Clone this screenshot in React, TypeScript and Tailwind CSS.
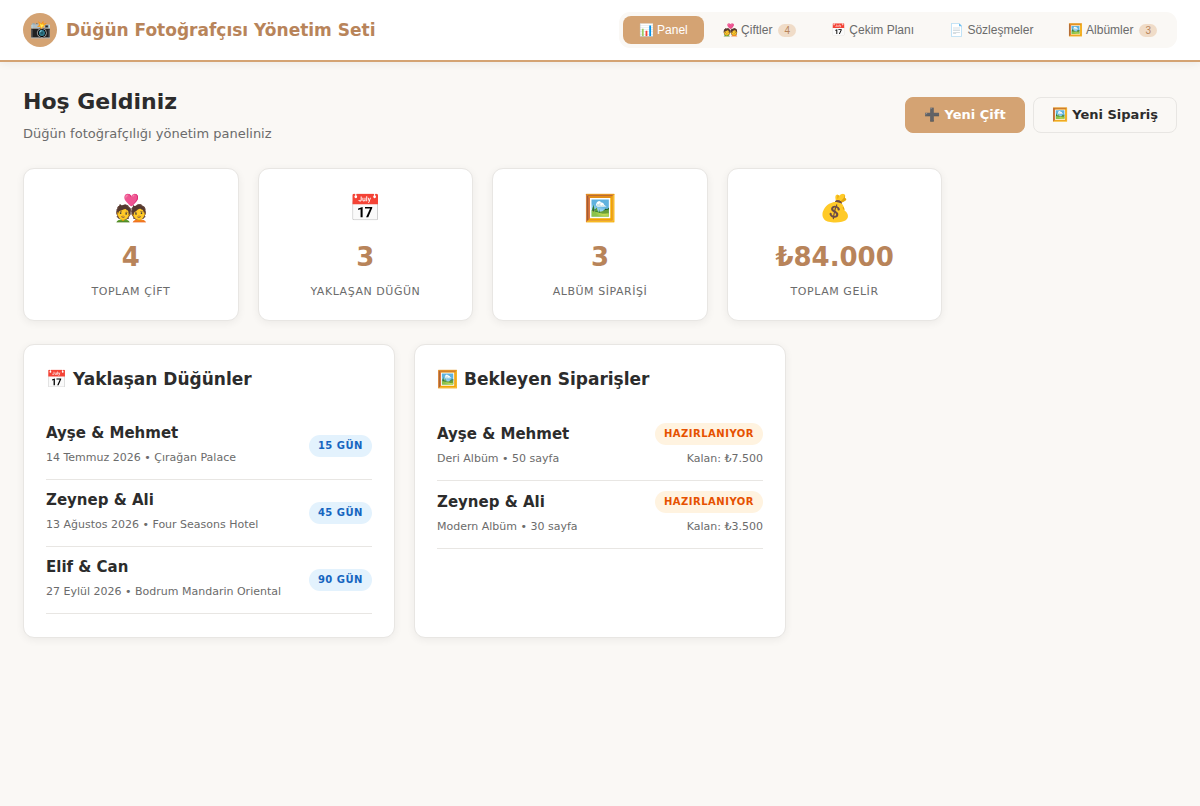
import React from "react";

type Tab = { icon: string; label: string; count?: number; active?: boolean };

const tabs: Tab[] = [
  { icon: "📊", label: "Panel", active: true },
  { icon: "💑", label: "Çiftler", count: 4 },
  { icon: "📅", label: "Çekim Planı" },
  { icon: "📄", label: "Sözleşmeler" },
  { icon: "🖼️", label: "Albümler", count: 3 },
];

const stats = [
  { icon: "💑", value: "4", label: "TOPLAM ÇİFT" },
  { icon: "📅", value: "3", label: "YAKLAŞAN DÜĞÜN" },
  { icon: "🖼️", value: "3", label: "ALBÜM SİPARİŞİ" },
  { icon: "💰", value: "₺84.000", label: "TOPLAM GELİR" },
];

const weddings = [
  { couple: "Ayşe & Mehmet", detail: "14 Temmuz 2026 • Çırağan Palace", left: "15 GÜN" },
  { couple: "Zeynep & Ali", detail: "13 Ağustos 2026 • Four Seasons Hotel", left: "45 GÜN" },
  { couple: "Elif & Can", detail: "27 Eylül 2026 • Bodrum Mandarin Oriental", left: "90 GÜN" },
];

const orders = [
  { couple: "Ayşe & Mehmet", detail: "Deri Albüm • 50 sayfa", status: "HAZIRLANIYOR", rest: "Kalan: ₺7.500" },
  { couple: "Zeynep & Ali", detail: "Modern Albüm • 30 sayfa", status: "HAZIRLANIYOR", rest: "Kalan: ₺3.500" },
];

const card = "rounded-[11px] border border-[#e8e6e3] bg-white shadow-[0_2px_8px_rgba(0,0,0,0.06)]";

function Panel({ title, children }: { title: string; children: React.ReactNode }) {
  return (
    <section className={`${card} px-[22px] pt-[22px] pb-[23px]`}>
      <h2 className="mb-[21px] text-[17px] leading-[25px] font-bold">{title}</h2>
      <ul>{children}</ul>
    </section>
  );
}

function Row({ couple, detail, children }: { couple: string; detail: string; children: React.ReactNode }) {
  return (
    <li className="flex items-center justify-between gap-3 border-b border-[#e8e6e3] py-[10px]">
      <div>
        <h3 className="mb-[3px] text-[15px] leading-[21px] font-bold">{couple}</h3>
        <p className="text-[11px] leading-[22px] text-[#6b6b6b]">{detail}</p>
      </div>
      {children}
    </li>
  );
}

const pill = "rounded-full px-[9px] text-[10px] leading-[22px] font-bold tracking-wider whitespace-nowrap";

export default function App() {
  return (
    <div className="min-h-screen bg-[#faf8f5] font-['DejaVu_Sans',sans-serif] text-[#2c2c2c]">
      <header className="flex flex-wrap items-center justify-between gap-x-4 border-b-2 border-[#d4a373] bg-white px-[23px] py-3 shadow-[0_2px_8px_rgba(0,0,0,0.06)]">
        <div className="flex items-center gap-[9px]">
          <span className="flex size-[34px] items-center justify-center rounded-full bg-[#d4a373] text-[17px]">📸</span>
          <span className="text-[17px] leading-[27px] font-bold text-[#b8845a]">Düğün Fotoğrafçısı Yönetim Seti</span>
        </div>
        <nav className="flex gap-[3px] rounded-[11px] bg-[#faf8f5] p-1 font-['Liberation_Sans',sans-serif]">
          {tabs.map((t) => (
            <button
              key={t.label}
              type="button"
              className={`flex items-center rounded-lg px-4 text-[12px] leading-[28px] whitespace-nowrap ${
                t.active ? "bg-[#d4a373] text-white" : "text-[#6b6b6b]"
              }`}
            >
              {t.icon} {t.label}
              {t.count !== undefined && (
                <span className="ml-1.5 rounded-full bg-[#f0dcc8] px-1.5 text-[10px] leading-[13px] text-[#b8845a]">
                  {t.count}
                </span>
              )}
            </button>
          ))}
        </nav>
      </header>

      <main className="px-[23px] pt-[23px] pb-6">
        <div className="mb-[23px] flex flex-wrap items-center justify-between gap-4">
          <div>
            <h1 className="text-[22px] leading-[34px] font-bold">Hoş Geldiniz</h1>
            <p className="mt-1 text-[13px] leading-[22px] text-[#6b6b6b]">Düğün fotoğrafçılığı yönetim paneliniz</p>
          </div>
          <div className="flex gap-2">
            <button type="button" className="rounded-lg border border-[#d4a373] bg-[#d4a373] px-[18px] text-[13px] leading-[34px] font-bold text-white">
              ➕ Yeni Çift
            </button>
            <button type="button" className="rounded-lg border border-[#e8e6e3] bg-[#faf8f5] px-[18px] text-[13px] leading-[34px] font-bold">
              🖼️ Yeni Sipariş
            </button>
          </div>
        </div>

        <div className="mb-[23px] grid grid-cols-[repeat(auto-fill,minmax(188px,1fr))] gap-[19px]">
          {stats.map((s) => (
            <div key={s.label} className={`${card} flex flex-col items-center p-[19px]`}>
              <span className="mb-2 text-[26px] leading-[40px]">{s.icon}</span>
              <span className="text-[26px] leading-[42px] font-bold text-[#b8845a]">{s.value}</span>
              <span className="mt-1 text-[11px] leading-[19px] tracking-wider text-[#6b6b6b]">{s.label}</span>
            </div>
          ))}
        </div>

        <div className="grid grid-cols-[repeat(auto-fill,minmax(328px,1fr))] gap-[19px]">
          <Panel title="📅 Yaklaşan Düğünler">
            {weddings.map((w) => (
              <Row key={w.couple} couple={w.couple} detail={w.detail}>
                <span className={`${pill} bg-[#e3f2fd] text-[#1565c0]`}>{w.left}</span>
              </Row>
            ))}
          </Panel>
          <Panel title="🖼️ Bekleyen Siparişler">
            {orders.map((o) => (
              <Row key={o.couple} couple={o.couple} detail={o.detail}>
                <div className="flex flex-col items-end gap-[3px]">
                  <span className={`${pill} bg-[#fff3e0] text-[#e65100]`}>{o.status}</span>
                  <span className="text-[11px] leading-[22px] text-[#6b6b6b]">{o.rest}</span>
                </div>
              </Row>
            ))}
          </Panel>
        </div>
      </main>
    </div>
  );
}
